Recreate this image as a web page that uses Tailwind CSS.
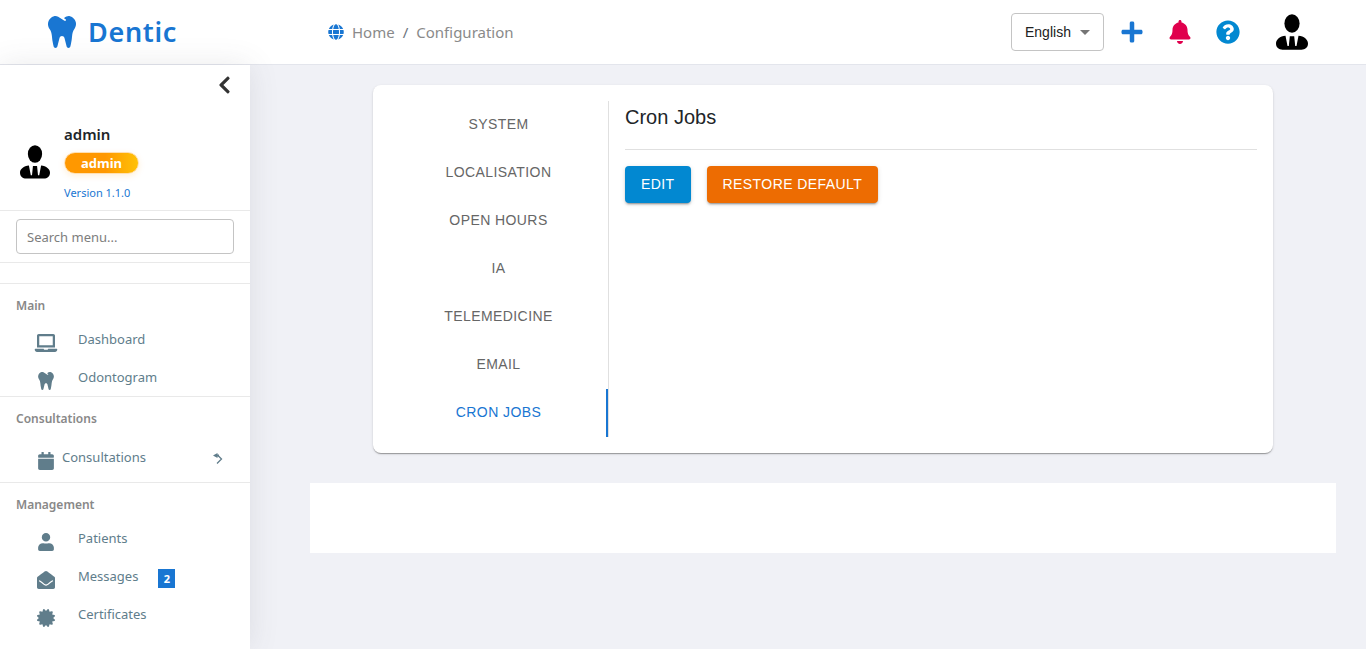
<!DOCTYPE html>
<html lang="en">
<head>
    <meta charset="UTF-8">
    <meta name="viewport" content="width=device-width, initial-scale=1.0">
    <title>Dentic - Configuration</title>
    <script src="https://cdn.jsdelivr.net/npm/@tailwindcss/browser@4"></script>
</head>
<body class="flex flex-col min-h-screen bg-[#f0f1f6] font-['Noto_Sans',sans-serif] text-[#212529]">
    <!-- Shared icons -->
    <svg class="hidden">
        <symbol id="tooth" viewBox="0 0 448 512"><path d="M443.98 96.25c-11.01-45.22-47.11-82.06-92.01-93.72-32.19-8.36-63 5.1-89.14 24.33-3.25 2.39-6.96 3.73-10.5 5.48l28.32 18.21c7.42 4.77 9.58 14.67 4.8 22.11-4.46 6.95-14.27 9.86-22.11 4.8L162.83 12.84c-20.7-10.85-43.38-16.4-66.81-10.31-44.9 11.67-81 48.5-92.01 93.72-10.13 41.62-.42 80.81 21.5 110.43 23.36 31.57 32.68 68.66 36.29 107.35 4.4 47.16 10.33 94.16 20.94 140.32l7.8 33.95c3.19 13.87 15.49 23.7 29.67 23.7 13.97 0 26.15-9.55 29.54-23.16l34.47-138.42c4.56-18.32 20.96-31.16 39.76-31.16s35.2 12.85 39.76 31.16l34.47 138.42c3.39 13.61 15.57 23.16 29.54 23.16 14.18 0 26.48-9.83 29.67-23.7l7.8-33.95c10.61-46.15 16.53-93.16 20.94-140.32 3.61-38.7 12.93-75.78 36.29-107.35 21.95-29.61 31.66-68.8 21.53-110.43z"/></symbol>
        <symbol id="avatar" viewBox="0 0 32 36">
            <ellipse cx="16" cy="9.5" rx="7.6" ry="9.300"/>
            <path d="M9.500 21.800C4 22.300 0 25.500 0 29.500C0 33.500 3 35.700 6.500 35.700H25.500C29 35.700 32 33.500 32 29.500C32 25.500 28 22.300 22.500 21.800L20.500 32H19.200L18.200 22.300H13.800L12.800 32H11.500Z"/>
        </symbol>
    </svg>

    <header class="flex items-center h-[65px] bg-white border-b border-[#e3e5ec]">
        <a href="#" class="flex items-center w-[328px] pl-12 text-[#1976d2]">
            <svg class="w-7 h-8" fill="currentColor"><use href="#tooth"/></svg>
            <span class="ml-3 text-[27px] leading-8 font-semibold tracking-wide">Dentic</span>
        </a>
        <nav class="flex items-center gap-2 text-[15px] text-[#8a8a8a]">
            <svg class="w-4 h-4" viewBox="0 0 496 512" fill="#1976d2"><path d="M336.500 160C322 70.700 287.800 8 248 8s-74 62.700-88.500 152h177zM152 256c0 22.200 1.200 43.500 3.300 64h185.300c2.100-20.500 3.300-41.800 3.300-64s-1.200-43.500-3.300-64H155.300c-2.100 20.500-3.300 41.800-3.300 64zm324.700-96c-28.600-67.900-86.500-120.400-158-141.600 24.400 33.800 41.200 84.700 50 141.600h108zM177.200 18.400C105.800 39.600 47.800 92.100 19.300 160h108c8.700-56.900 25.500-107.800 49.900-141.600zM487.400 192H372.700c2.100 21 3.300 42.500 3.300 64s-1.200 43-3.300 64h114.600c5.500-20.500 8.600-41.800 8.600-64s-3.100-43.500-8.500-64zM120 256c0-21.500 1.200-43 3.300-64H8.600C3.200 212.500 0 233.800 0 256s3.200 43.500 8.600 64h114.600c-2-21-3.200-42.500-3.200-64zm39.500 96c14.500 89.300 48.700 152 88.500 152s74-62.700 88.500-152h-177zm159.300 141.600c71.400-21.200 129.400-73.700 158-141.600h-108c-8.800 56.900-25.600 107.800-50 141.600zM19.300 352c28.600 67.900 86.500 120.400 158 141.600-24.400-33.800-41.200-84.700-50-141.600h-108z"/></svg>
            <a href="#">Home</a>
            <span class="text-[#6c757d]">/</span>
            <a href="#">Configuration</a>
        </nav>
        <div class="flex items-center ml-auto pr-[58px]">
            <div class="relative mr-4 font-['Liberation_Sans',sans-serif]">
                <select aria-label="Language" class="appearance-none w-[93px] h-[38px] pl-[13px] rounded-sm border border-[#c4c4c4] bg-white text-sm text-[#212121]">
                    <option>English</option>
                </select>
                <svg class="absolute right-[14px] top-[17px] w-[10px] h-[5px] pointer-events-none" viewBox="0 0 10 5" fill="#757575"><path d="M0 0h10L5 5z"/></svg>
            </div>
            <div class="flex items-center gap-6">
                <button aria-label="Add" class="flex justify-center w-6"><svg class="w-[22px] h-6" viewBox="0 0 448 512" fill="#1976d2"><path d="M416 208H272V64c0-17.670-14.330-32-32-32h-32c-17.670 0-32 14.330-32 32v144H32c-17.670 0-32 14.330-32 32v32c0 17.670 14.330 32 32 32h144v144c0 17.670 14.330 32 32 32h32c17.670 0 32-14.330 32-32V304h144c17.670 0 32-14.330 32-32v-32c0-17.670-14.330-32-32-32z"/></svg></button>
                <button aria-label="Notifications" class="flex justify-center w-6"><svg class="w-[22px] h-6" viewBox="0 0 448 512" fill="#e0004d"><path d="M224 512c35.320 0 63.970-28.650 63.970-64H160.030c0 35.350 28.650 64 63.970 64zm215.390-149.710c-19.320-20.760-55.470-51.990-55.470-154.290 0-77.700-54.480-139.900-127.940-155.160V32c0-17.670-14.320-32-31.980-32s-31.980 14.330-31.980 32v20.840C118.560 68.100 64.080 130.300 64.080 208c0 102.300-36.150 133.530-55.470 154.290-6 6.450-8.660 14.160-8.610 21.710.11 16.400 12.980 32 32.100 32h383.800c19.120 0 32-15.600 32.100-32 .05-7.550-2.610-15.270-8.610-21.710z"/></svg></button>
                <button aria-label="Help"><svg class="w-6 h-6" viewBox="0 0 512 512" fill="#0288d1"><path d="M504 256c0 136.997-111.043 248-248 248S8 392.997 8 256C8 119.083 119.043 8 256 8s248 111.083 248 248zM262.655 90c-54.497 0-89.255 22.957-116.549 63.758-3.536 5.286-2.353 12.415 2.715 16.258l34.699 26.310c5.205 3.947 12.621 3.008 16.665-2.122 17.864-22.658 30.113-35.797 57.303-35.797 20.429 0 45.698 13.148 45.698 32.958 0 14.976-12.363 22.667-32.534 33.976C247.128 238.528 216 254.941 216 296v4c0 6.627 5.373 12 12 12h56c6.627 0 12-5.373 12-12v-1.333c0-28.462 83.186-29.647 83.186-106.667 0-58.002-60.165-102-116.531-102zM256 338c-25.365 0-46 20.635-46 46 0 25.364 20.635 46 46 46s46-20.636 46-46c0-25.365-20.635-46-46-46z"/></svg></button>
            </div>
            <button aria-label="Account" class="ml-9"><svg class="w-8 h-9"><use href="#avatar"/></svg></button>
        </div>
    </header>

    <div class="flex flex-1">
        <aside class="w-[250px] shrink-0 bg-white shadow-[0_0_28px_rgba(82,85,92,0.12)]">
            <div class="flex justify-end h-10 pr-[19px] items-center">
                <button aria-label="Collapse menu"><svg class="w-[13px] h-5" viewBox="0 0 320 512" fill="#333"><path d="M34.520 239.030L228.870 44.690c9.370-9.370 24.570-9.370 33.940 0l22.670 22.670c9.360 9.360 9.370 24.520.04 33.900L131.490 256l154.020 154.750c9.340 9.380 9.320 24.540-.04 33.900l-22.670 22.670c-9.370 9.370-24.570 9.370-33.940 0L34.520 272.970c-9.370-9.370-9.370-24.570 0-33.940z"/></svg></button>
            </div>
            <div class="flex items-center gap-[14px] h-[106px] pt-2 pl-5 border-b border-[#e9e9e9]">
                <svg class="w-[30px] h-[34px]"><use href="#avatar"/></svg>
                <div class="flex flex-col items-start">
                    <span class="text-[15px] leading-6 font-semibold">admin</span>
                    <span class="mt-[6px] px-4 rounded-full border border-[#ffe0b2] bg-linear-to-r from-[#ff9800] from-55% to-[#ffc107] text-[13px] leading-5 font-bold text-white shadow-[0_2px_6px_rgba(255,152,0,0.15)]">admin</span>
                    <a href="#" class="mt-[10px] text-[11px] leading-[18px] text-[#1976d2]">Version 1.1.0</a>
                </div>
            </div>
            <div class="px-4 py-2 border-b border-[#e9e9e9]">
                <input type="text" aria-label="Search menu" placeholder="Search menu..." class="block w-full h-[35px] px-[10px] rounded-sm border border-[#c4c4c4] text-[13px] placeholder:text-[#7d7d7d]">
            </div>
            <nav class="pt-5 text-[13px] text-[#607d8b]">
                <section class="border-t border-[#e9e9e9]">
                    <h2 class="px-4 pt-3 pb-[6px] text-xs leading-5 font-semibold text-[#888]">Main</h2>
                    <a href="#" class="flex h-[38px] pl-[34px] leading-[34px]">
                        <svg class="w-6 h-[18px] mt-3" viewBox="0 0 640 512" fill="currentColor"><path d="M624 416H381.540c-.74 19.810-14.710 32-32.740 32H288c-18.690 0-33.020-17.470-32.770-32H16c-8.800 0-16 7.200-16 16v16c0 35.200 28.800 64 64 64h512c35.200 0 64-28.800 64-64v-16c0-8.800-7.200-16-16-16zM576 48c0-26.400-21.600-48-48-48H112C85.600 0 64 21.600 64 48v336h512V48zm-64 272H128V64h384v256z"/></svg>
                        <span class="ml-5">Dashboard</span>
                    </a>
                    <a href="#" class="flex h-[36px] pl-[34px] leading-[34px]">
                        <svg class="w-6 h-[18px] mt-3" fill="currentColor"><use href="#tooth"/></svg>
                        <span class="ml-5">Odontogram</span>
                    </a>
                </section>
                <section class="border-t border-[#e9e9e9]">
                    <h2 class="px-4 pt-3 pb-[11px] text-xs leading-5 font-semibold text-[#888]">Consultations</h2>
                    <button class="flex w-full h-[42px] pl-[34px] pr-[27px] leading-[34px]">
                        <svg class="w-6 h-[18px] mt-3" viewBox="0 0 448 512" fill="currentColor"><path d="M12 192h424c6.600 0 12 5.400 12 12v260c0 26.500-21.500 48-48 48H48c-26.500 0-48-21.500-48-48V204c0-6.600 5.400-12 12-12zm436-44v-36c0-26.500-21.500-48-48-48h-48V12c0-6.600-5.400-12-12-12h-40c-6.600 0-12 5.400-12 12v52H160V12c0-6.600-5.400-12-12-12h-40c-6.600 0-12 5.400-12 12v52H48C21.500 64 0 85.500 0 112v36c0 6.600 5.400 12 12 12h424c6.600 0 12-5.400 12-12z"/></svg>
                        <span class="ml-1">Consultations</span>
                        <svg class="w-[10px] h-3 mt-3 ml-auto" viewBox="0 0 10 12" fill="currentColor"><path d="M0 3.500L4.500 1v1.500H6v2H4.500V6z"/><path d="M5 3.500l3.500 3.500L4 11.500" fill="none" stroke="currentColor" stroke-width="1.300"/></svg>
                    </button>
                </section>
                <section class="border-t border-[#e9e9e9]">
                    <h2 class="px-4 pt-3 pb-[6px] text-xs leading-5 font-semibold text-[#888]">Management</h2>
                    <a href="#" class="flex h-[38px] pl-[34px] leading-[34px]">
                        <svg class="w-6 h-[18px] mt-3" viewBox="0 0 448 512" fill="currentColor"><path d="M224 240c66 0 120-54 120-120S290 0 224 0 104 54 104 120s54 120 120 120zm89.600 48h-16.700c-22.200 10.200-46.900 12-72.900 12s-50.600-1.800-72.900-12h-16.700C60.200 288 0 340 0 414V464c0 26.500 21.500 48 48 48h352c26.500 0 48-21.500 48-48v-50c0-74-60.200-126-134.400-126z"/></svg>
                        <span class="ml-5">Patients</span>
                    </a>
                    <a href="#" class="flex h-[38px] pl-[34px] leading-[34px]">
                        <svg class="w-6 h-[18px] mt-3" viewBox="0 0 512 512" fill="currentColor"><path d="M512 464c0 26.510-21.490 48-48 48H48c-26.510 0-48-21.490-48-48V200.724a48 48 0 0 1 18.387-37.776c24.913-19.529 45.501-35.365 164.200-121.511C199.412 29.170 232.797-.347 256 .003c23.198-.354 56.596 29.172 73.413 41.433 118.687 86.137 139.303 101.995 164.200 121.512A48 48 0 0 1 512 200.724V464zm-65.666-196.605c-2.563-3.728-7.700-4.595-11.339-1.907-22.845 16.873-55.462 40.705-105.582 77.079-16.825 12.266-50.210 41.781-73.413 41.430-23.211.344-56.559-29.143-73.413-41.430-50.114-36.370-82.734-60.204-105.582-77.079-3.639-2.688-8.776-1.821-11.339 1.907l-9.072 13.196a7.998 7.998 0 0 0 1.839 10.967c22.887 16.899 55.454 40.690 105.303 76.868 20.274 14.781 56.524 47.813 92.264 47.573 35.724.242 71.961-32.771 92.263-47.573 49.850-36.179 82.418-59.970 105.303-76.868a7.998 7.998 0 0 0 1.839-10.967l-9.071-13.196z"/></svg>
                        <span class="ml-5">Messages</span>
                        <span class="self-start mt-[10px] ml-5 w-[17px] bg-[#1976d2] text-center text-[11px] leading-[19px] font-bold text-white">2</span>
                    </a>
                    <a href="#" class="flex h-[38px] pl-[34px] leading-[34px]">
                        <svg class="w-6 h-[18px] mt-3" viewBox="0 0 512 512" fill="currentColor"><path d="M458.622 255.920l45.985-45.005c13.708-12.977 7.316-36.039-10.664-40.339l-62.650-15.990 17.661-62.015c4.991-17.838-11.829-34.663-29.661-29.671l-61.994 17.667-15.984-62.671C337.085.197 313.765-6.276 300.990 7.228L256 53.570 211.011 7.229c-12.630-13.351-36.047-7.234-40.325 10.668l-15.984 62.671-61.995-17.667C74.870 57.907 58.056 74.738 63.046 92.572l17.661 62.015-62.650 15.990C.069 174.878-6.310 197.944 7.392 210.915l45.985 45.005-45.985 45.004c-13.708 12.977-7.316 36.039 10.664 40.339l62.650 15.990-17.661 62.015c-4.991 17.838 11.829 34.663 29.661 29.671l61.994-17.667 15.984 62.671c4.439 18.575 27.696 24.018 40.325 10.668L256 458.610l44.989 46.001c12.500 13.488 35.987 7.486 40.325-10.668l15.984-62.671 61.994 17.667c17.836 4.994 34.651-11.837 29.661-29.671l-17.661-62.015 62.650-15.990c17.987-4.302 24.366-27.367 10.664-40.339l-45.984-45.004z"/></svg>
                        <span class="ml-5">Certificates</span>
                    </a>
                </section>
            </nav>
        </aside>

        <main class="flex-1 px-[30px] pt-5 pl-[60px]">
            <div class="flex max-w-[900px] mx-auto p-4 rounded-lg bg-white font-['Liberation_Sans',sans-serif] shadow-[0_2px_1px_-1px_rgba(0,0,0,0.2),0_1px_1px_rgba(0,0,0,0.14),0_1px_3px_rgba(0,0,0,0.12)]">
                <div role="tablist" class="flex flex-col w-[220px] border-r border-[#e0e0e0] text-sm text-[#666] tracking-[0.03em]">
                    <button role="tab" class="h-12 pb-[2px]">SYSTEM</button>
                    <button role="tab" class="h-12 pb-[2px]">LOCALISATION</button>
                    <button role="tab" class="h-12 pb-[2px]">OPEN HOURS</button>
                    <button role="tab" class="h-12 pb-[2px]">IA</button>
                    <button role="tab" class="h-12 pb-[2px]">TELEMEDICINE</button>
                    <button role="tab" class="h-12 pb-[2px]">EMAIL</button>
                    <button role="tab" aria-selected="true" class="h-12 pl-[2px] pb-[2px] border-r-2 border-[#1976d2] text-[#1976d2]">CRON JOBS</button>
                </div>
                <div role="tabpanel" class="flex-1 pl-4">
                    <h1 class="pb-4 text-xl leading-8 border-b border-[#e0e0e0]">Cron Jobs</h1>
                    <div class="flex gap-4 mt-4 text-sm text-white tracking-[0.03em]">
                        <button class="h-[37px] px-4 pb-[2px] rounded-sm bg-[#0288d1] shadow-[0_3px_1px_-2px_rgba(0,0,0,0.2),0_2px_2px_rgba(0,0,0,0.14),0_1px_5px_rgba(0,0,0,0.12)]">EDIT</button>
                        <button class="h-[37px] px-4 pb-[2px] rounded-sm bg-[#ed6c02] shadow-[0_3px_1px_-2px_rgba(0,0,0,0.2),0_2px_2px_rgba(0,0,0,0.14),0_1px_5px_rgba(0,0,0,0.12)]">RESTORE DEFAULT</button>
                    </div>
                </div>
            </div>
            <footer class="h-[70px] mt-[30px] bg-white"></footer>
        </main>
    </div>
</body>
</html>
